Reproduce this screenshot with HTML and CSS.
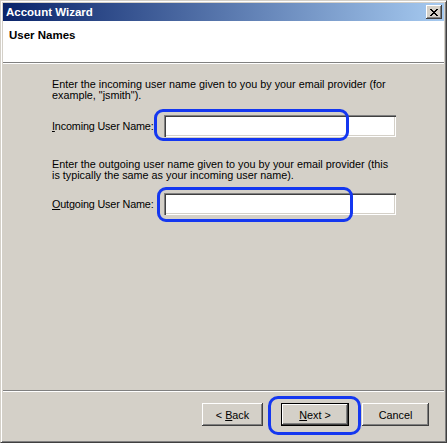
FILE: index.html
```html
<!DOCTYPE html>
<html lang="en">
<head>
<meta charset="utf-8">
<title>Account Wizard</title>
<link rel="stylesheet" href="styles.css">
</head>
<body>
<div class="window">
  <div class="titlebar">
    <span class="title">Account Wizard</span>
    <button class="close" aria-label="Close">
      <svg width="8" height="7" viewBox="0 0 8 7" shape-rendering="crispEdges">
        <path d="M0 0h2v1H0zM6 0h2v1H6zM1 1h2v1H1zM5 1h2v1H5zM2 2h4v1H2zM3 3h2v1H3zM2 4h4v1H2zM1 5h2v1H1zM5 5h2v1H5zM0 6h2v1H0zM6 6h2v1H6z" fill="#000"/>
      </svg>
    </button>
  </div>
  <div class="header">
    <h1 class="heading">User Names</h1>
  </div>
  <div class="content">
    <p class="desc">Enter the incoming user name given to you by your email provider (for<br>example, "jsmith").</p>
    <div class="field-row">
      <label class="field-label" for="incoming"><u>I</u>ncoming User Name:</label>
      <input class="textbox" id="incoming" type="text">
    </div>
    <p class="desc desc-second">Enter the outgoing user name given to you by your email provider (this<br>is typically the same as your incoming user name).</p>
    <div class="field-row">
      <label class="field-label" for="outgoing"><u>O</u>utgoing User Name:</label>
      <input class="textbox" id="outgoing" type="text">
    </div>
  </div>
  <div class="footer">
    <button class="btn btn-back">&lt; <u>B</u>ack</button>
    <button class="btn btn-next"><u>N</u>ext &gt;</button>
    <button class="btn btn-cancel">Cancel</button>
  </div>
</div>
<div class="mark mark-incoming"></div>
<div class="mark mark-outgoing"></div>
<div class="mark mark-next"></div>
</body>
</html>
```
FILE: styles.css
```css
html, body {
  margin: 0;
  padding: 0;
  background: #d4d0c8;
}

body {
  position: relative;
  width: 447px;
  height: 443px;
  overflow: hidden;
  font-family: "Liberation Sans", Arial, sans-serif;
  font-size: 10.8px;
  color: #000;
}

.window {
  box-sizing: border-box;
  width: 447px;
  height: 443px;
  background: #d4d0c8;
  border: 1px solid;
  border-color: #d4d0c8 #404040 #404040 #d4d0c8;
  box-shadow: inset 1px 1px 0 #ffffff, inset -1px -1px 0 #808080;
  padding: 2px;
  display: flex;
  flex-direction: column;
}

.titlebar {
  height: 18px;
  flex: none;
  display: flex;
  align-items: center;
  justify-content: space-between;
  padding: 0 2px 0 3px;
  background: linear-gradient(to right, #0a246a, #a6caf0);
}

.title {
  color: #fff;
  font-weight: bold;
  font-size: 11.5px;
  line-height: 18px;
}

.close {
  width: 16px;
  height: 14px;
  padding: 0;
  border: none;
  background: #d4d0c8;
  box-shadow: inset -1px -1px 0 #404040, inset 1px 1px 0 #ffffff, inset -2px -2px 0 #808080;
  display: flex;
  align-items: center;
  justify-content: center;
}

.close svg {
  display: block;
  margin-left: -1px;
}

.header {
  flex: none;
  height: 41px;
  background: #fff;
  border-bottom: 1px solid #808080;
  padding-left: 6px;
}

.heading {
  margin: 0;
  padding-top: 7px;
  font-size: 11.5px;
  line-height: 14px;
  font-weight: bold;
}

.content {
  flex: 1;
  border-top: 1px solid #fff;
  padding: 15px 0 0 49px;
  display: flex;
  flex-direction: column;
}

.desc {
  margin: 0;
  line-height: 11px;
}

.desc-second {
  margin-top: 22px;
}

.field-row {
  display: flex;
  align-items: center;
  margin-top: 14px;
}

.desc-second + .field-row {
  margin-top: 12px;
}

.field-label {
  width: 112px;
  flex: none;
  line-height: 13px;
  letter-spacing: -0.15px;
}

.textbox {
  box-sizing: border-box;
  width: 232px;
  height: 22px;
  margin: 0;
  padding: 2px 3px;
  border: none;
  outline: none;
  background: #fff;
  font: inherit;
  box-shadow: inset 1px 1px 0 #808080, inset 2px 2px 0 #404040, inset -1px -1px 0 #ffffff, inset -2px -2px 0 #d4d0c8;
}

.footer {
  flex: none;
  height: 50px;
  box-sizing: border-box;
  border-top: 1px solid #808080;
  box-shadow: inset 0 1px 0 #ffffff;
  padding: 12px 15px 0 0;
  display: flex;
  justify-content: flex-end;
  align-items: flex-start;
}

.btn {
  box-sizing: border-box;
  height: 23px;
  padding: 0;
  margin: 0;
  border: none;
  background: #d4d0c8;
  font: inherit;
  color: #000;
  box-shadow: inset -1px -1px 0 #404040, inset 1px 1px 0 #ffffff, inset -2px -2px 0 #808080;
}

.btn-back {
  width: 61px;
}

.btn-next {
  width: 68px;
  margin-left: 18px;
  border: 1px solid #000;
}

.btn-cancel {
  width: 67px;
  margin-left: 13px;
}

.mark {
  position: absolute;
  box-sizing: border-box;
  border: 3px solid #1437f0;
  border-radius: 9px;
}

.mark-incoming {
  left: 154px;
  top: 109px;
  width: 195px;
  height: 32px;
}

.mark-outgoing {
  left: 157px;
  top: 187px;
  width: 196px;
  height: 35px;
}

.mark-next {
  left: 268px;
  top: 396px;
  width: 93px;
  height: 39px;
  border-radius: 10px;
}
```
